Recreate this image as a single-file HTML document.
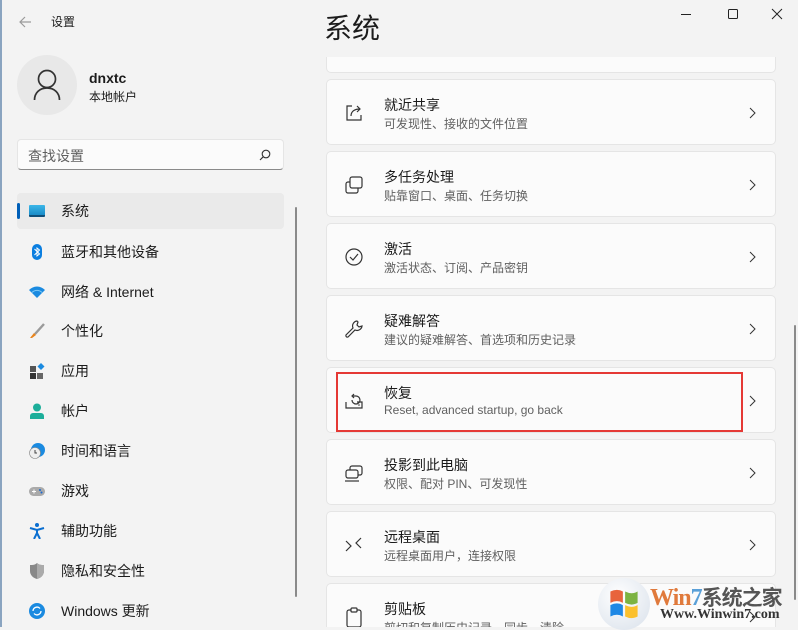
<!DOCTYPE html>
<html><head><meta charset="utf-8"><style>
*{margin:0;padding:0;box-sizing:border-box}
body{width:798px;height:627px;overflow:hidden;background:#f3f3f3;font-family:"Liberation Sans","Noto Sans CJK SC",sans-serif;color:#1b1b1b;position:relative}
.abs{position:absolute}
.nav{position:absolute;left:17px;width:267px;height:36px;font-size:14px;line-height:36px}
.nav .t{position:absolute;left:44px;top:0}
.nav .i{position:absolute;left:12px;top:10px;width:16px;height:16px}
.card{position:absolute;left:326px;width:450px;height:66px;background:#fbfbfb;border:1px solid #e5e5e5;border-radius:5px}
.card .h{position:absolute;left:57px;top:15px;font-size:14px;color:#1b1b1b}
.card .s{position:absolute;left:57px;top:35px;font-size:12px;color:#606060}
.card .ic{position:absolute;left:17px;top:23px;width:20px;height:20px}
.card .ch{position:absolute;right:18px;top:27px;width:8px;height:12px}
</style></head><body>
<div class="abs" style="left:0;top:0;width:2px;height:627px;background:#8aa4c0"></div>
<svg class="abs" style="left:18px;top:15px" width="14" height="14" viewBox="0 0 14 14"><path d="M13 7H2M7 2L2 7l5 5" stroke="#9a9a9a" stroke-width="1.2" fill="none"/></svg>
<div class="abs" style="left:51px;top:13px;font-size:12px">设置</div>
<svg class="abs" style="left:681px;top:8px" width="110" height="14"><path d="M0 6.5h10" stroke="#222" stroke-width="1"/><rect x="47.5" y="1.5" width="9" height="9" rx="1" fill="none" stroke="#222"/><path d="M91 1l10 10M101 1L91 11" stroke="#222"/></svg>
<div class="abs" style="left:17px;top:55px;width:60px;height:60px;border-radius:50%;background:#e8e8e8"></div>
<svg class="abs" style="left:33px;top:69px" width="28" height="32" viewBox="0 0 28 32"><circle cx="14" cy="10" r="8.5" fill="none" stroke="#333" stroke-width="1.7"/><path d="M1.5 31c0-7 5-12 12.5-12s12.5 5 12.5 12" fill="none" stroke="#333" stroke-width="1.7"/></svg>
<div class="abs" style="left:89px;top:70px;font-size:14px;font-weight:bold">dnxtc</div>
<div class="abs" style="left:89px;top:88px;font-size:12px">本地帐户</div>
<div class="abs" style="left:17px;top:139px;width:267px;height:31px;background:#fbfbfb;border:1px solid #e5e5e5;border-bottom:1px solid #8a8a8a;border-radius:4px"></div>
<div class="abs" style="left:28px;top:146px;font-size:14px;color:#5f5f5f">查找设置</div>
<svg class="abs" style="left:259px;top:149px" width="12" height="12"><circle cx="7" cy="5" r="3.8" fill="none" stroke="#333" stroke-width="1.1"/><path d="M4.3 7.7L1 11" stroke="#333" stroke-width="1.1"/></svg>
<div class="nav" style="top:193px;background:#eaeaea;border-radius:4px"><div class="abs" style="left:0;top:10px;width:3px;height:16px;background:#005fb8;border-radius:2px"></div>
<div class="i" style="top:12px;height:12px;background:linear-gradient(#3bb6e8,#1a8cc8);border-bottom:2px solid #0f4f7a;border-radius:1px"></div><div class="t">系统</div></div>
<div class="nav" style="top:234px"><svg class="i" viewBox="0 0 16 16"><rect x="3" y="0" width="10" height="16" rx="5" fill="#0a7ee0"/><path d="M5.5 5l5 5-2.5 2V4l2.5 2-5 5" stroke="#fff" fill="none" stroke-width="1"/></svg><div class="t">蓝牙和其他设备</div></div>
<div class="nav" style="top:274px"><svg class="i" viewBox="0 0 16 16"><path d="M0 6a11 11 0 0116 0L8 14z" fill="#1a8ae0"/><path d="M3 8.5a7 7 0 0110 0" stroke="#7cc8f5" fill="none"/></svg><div class="t">网络 &amp; Internet</div></div>
<div class="nav" style="top:313px"><svg class="i" viewBox="0 0 16 16"><path d="M15 1L6 11" stroke="#9a9a9a" stroke-width="2.4"/><path d="M5 10l2 2-4 3H1z" fill="#e8841c"/></svg><div class="t">个性化</div></div>
<div class="nav" style="top:353px"><svg class="i" viewBox="0 0 16 16"><rect x="1" y="3" width="6" height="6" fill="#555"/><rect x="1" y="10" width="6" height="6" fill="#333"/><rect x="8" y="10" width="6" height="6" fill="#666"/><path d="M12 0l3.5 3.5L12 7 8.5 3.5z" fill="#1a8ae0"/></svg><div class="t">应用</div></div>
<div class="nav" style="top:393px"><svg class="i" viewBox="0 0 16 16"><circle cx="8" cy="4.5" r="4" fill="#1cae9a"/><path d="M1 16v-3a3 3 0 013-3h8a3 3 0 013 3v3z" fill="#1cae9a"/></svg><div class="t">帐户</div></div>
<div class="nav" style="top:433px"><svg class="i" viewBox="0 0 16 16"><circle cx="9" cy="7" r="7" fill="#1a8ae0"/><circle cx="6" cy="10" r="5.5" fill="#eee" stroke="#888" stroke-width=".6"/><path d="M6 7v3h2" stroke="#444" fill="none"/></svg><div class="t">时间和语言</div></div>
<div class="nav" style="top:473px"><svg class="i" viewBox="0 0 16 16"><rect x="0" y="4" width="16" height="9" rx="4.5" fill="#aaa"/><path d="M3 8.5h4M5 6.5v4" stroke="#fff"/><circle cx="11" cy="7" r="1" fill="#1a6ad0"/><circle cx="12.5" cy="9.5" r="1" fill="#1a6ad0"/></svg><div class="t">游戏</div></div>
<div class="nav" style="top:513px"><svg class="i" viewBox="0 0 16 16"><circle cx="8" cy="2" r="2" fill="#0a6ed0"/><path d="M1 5l7 2 7-2M8 7v3l-3 6M8 10l3 6" stroke="#0a6ed0" stroke-width="2" fill="none"/></svg><div class="t">辅助功能</div></div>
<div class="nav" style="top:553px"><svg class="i" viewBox="0 0 16 16"><path d="M8 0c2 2 4 2 7 2v6c0 4-3 7-7 8-4-1-7-4-7-8V2c3 0 5 0 7-2z" fill="#888"/><path d="M8 0c2 2 4 2 7 2v6c0 4-3 7-7 8z" fill="#aaa"/></svg><div class="t">隐私和安全性</div></div>
<div class="nav" style="top:593px"><svg class="i" viewBox="0 0 16 16"><circle cx="8" cy="8" r="8" fill="#1a8ae0"/><path d="M4 8a4 4 0 017-2.5M12 8a4 4 0 01-7 2.5" stroke="#fff" stroke-width="1.3" fill="none"/></svg><div class="t">Windows 更新</div></div>
<div class="abs" style="left:295px;top:207px;width:2px;height:390px;background:#8a8a8a;border-radius:1px"></div>
<div class="abs" style="left:324px;top:7px;font-size:28px;color:#1b1b1b">系统</div>
<div class="abs" style="left:320px;top:57px;width:470px;height:570px;overflow:hidden">
<div class="card" style="left:6px;top:-50px"></div>
<div class="card" style="left:6px;top:22px"><svg class="ic" viewBox="0 0 20 20"><path d="M8 3H3v14h14v-5" fill="none" stroke="#333" stroke-width="1.2"/><path d="M7 13c0-5 4-7 9-7M13 3l3 3-3 3" fill="none" stroke="#333" stroke-width="1.2"/></svg><div class="h">就近共享</div><div class="s">可发现性、接收的文件位置</div><svg class="ch"><path d="M1 1l5 5-5 5" stroke="#333" fill="none"/></svg></div>
<div class="card" style="left:6px;top:94px"><svg class="ic" viewBox="0 0 20 20"><rect x="6" y="2" width="12" height="11" rx="2" fill="none" stroke="#333" stroke-width="1.2"/><path d="M6 7H4a2 2 0 00-2 2v7a2 2 0 002 2h8a2 2 0 002-2v-3" fill="none" stroke="#333" stroke-width="1.2"/></svg><div class="h">多任务处理</div><div class="s">贴靠窗口、桌面、任务切换</div><svg class="ch"><path d="M1 1l5 5-5 5" stroke="#333" fill="none"/></svg></div>
<div class="card" style="left:6px;top:166px"><svg class="ic" viewBox="0 0 20 20"><circle cx="10" cy="10" r="8" fill="none" stroke="#333" stroke-width="1.2"/><path d="M6 10l3 3 5-6" fill="none" stroke="#333" stroke-width="1.2"/></svg><div class="h">激活</div><div class="s">激活状态、订阅、产品密钥</div><svg class="ch"><path d="M1 1l5 5-5 5" stroke="#333" fill="none"/></svg></div>
<div class="card" style="left:6px;top:238px"><svg class="ic" viewBox="0 0 20 20"><path d="M13 2a5 5 0 00-4 7l-7 7a1.5 1.5 0 002 2l7-7a5 5 0 007-4l-3 1-2-2 1-3z" fill="none" stroke="#333" stroke-width="1.2"/></svg><div class="h">疑难解答</div><div class="s">建议的疑难解答、首选项和历史记录</div><svg class="ch"><path d="M1 1l5 5-5 5" stroke="#333" fill="none"/></svg></div>
<div class="card" style="left:6px;top:310px"><svg class="ic" viewBox="0 0 20 20"><path d="M2 11v6h16v-6h-5M8 9a4 4 0 104-4H9M10 3L8 5l2 2" fill="none" stroke="#333" stroke-width="1.2"/><circle cx="15" cy="14" r=".8" fill="#333"/></svg><div class="h">恢复</div><div class="s">Reset, advanced startup, go back</div><svg class="ch"><path d="M1 1l5 5-5 5" stroke="#333" fill="none"/></svg></div>
<div class="card" style="left:6px;top:382px"><svg class="ic" viewBox="0 0 20 20"><rect x="6" y="3" width="12" height="9" rx="2" fill="none" stroke="#333" stroke-width="1.2"/><rect x="2" y="7" width="12" height="8" rx="2" fill="#fbfbfb" stroke="#333" stroke-width="1.2"/><path d="M1 18h14" stroke="#333" stroke-width="1.2"/></svg><div class="h">投影到此电脑</div><div class="s">权限、配对 PIN、可发现性</div><svg class="ch"><path d="M1 1l5 5-5 5" stroke="#333" fill="none"/></svg></div>
<div class="card" style="left:6px;top:454px"><svg class="ic" viewBox="0 0 20 20"><path d="M2 6l5 5-5 5M17 3l-5 5 5 5" fill="none" stroke="#333" stroke-width="1.2"/></svg><div class="h">远程桌面</div><div class="s">远程桌面用户，连接权限</div><svg class="ch"><path d="M1 1l5 5-5 5" stroke="#333" fill="none"/></svg></div>
<div class="card" style="left:6px;top:526px"><svg class="ic" viewBox="0 0 20 20"><rect x="3" y="3" width="14" height="17" rx="2" fill="none" stroke="#333" stroke-width="1.2"/><rect x="7" y="1" width="6" height="4" rx="1" fill="#fbfbfb" stroke="#333" stroke-width="1.2"/></svg><div class="h">剪贴板</div><div class="s">剪切和复制历史记录、同步、清除</div><svg class="ch"><path d="M1 1l5 5-5 5" stroke="#333" fill="none"/></svg></div>
</div>
<div class="abs" style="left:336px;top:372px;width:407px;height:60px;border:2px solid #e53935"></div>
<div class="abs" style="left:794px;top:325px;width:2px;height:275px;background:#8a8a8a;border-radius:1px"></div>
<div class="abs" style="left:598px;top:578px;width:52px;height:52px;border-radius:50%;background:radial-gradient(circle at 40% 35%,#fff,#d8e0ea)"></div>
<svg class="abs" style="left:607px;top:587px" width="34" height="34" viewBox="0 0 30 30"><path d="M3 4q6-3 11 0v10q-5-3-11 0z" fill="#e8643c"/><path d="M16 4q6 3 11 0v10q-5 3-11 0z" fill="#7cb342"/><path d="M3 16q6-3 11 0v10q-5-3-11 0z" fill="#1e88e5"/><path d="M16 16q6 3 11 0v10q-5 3-11 0z" fill="#fbc02d"/></svg>
<div class="abs" style="left:650px;top:582px;font-size:24px;font-weight:bold;font-family:'Liberation Serif',serif;color:#e07a3c;letter-spacing:-1px">Win<span style="color:#5aa0d8">7</span><span style="color:#555;font-family:'Noto Sans CJK SC',sans-serif;font-size:21px">系统之家</span></div>
<div class="abs" style="left:660px;top:607px;font-size:14px;font-weight:bold;font-family:'Liberation Serif',serif;color:#333">Www.Winwin7.com</div>
</body></html>
